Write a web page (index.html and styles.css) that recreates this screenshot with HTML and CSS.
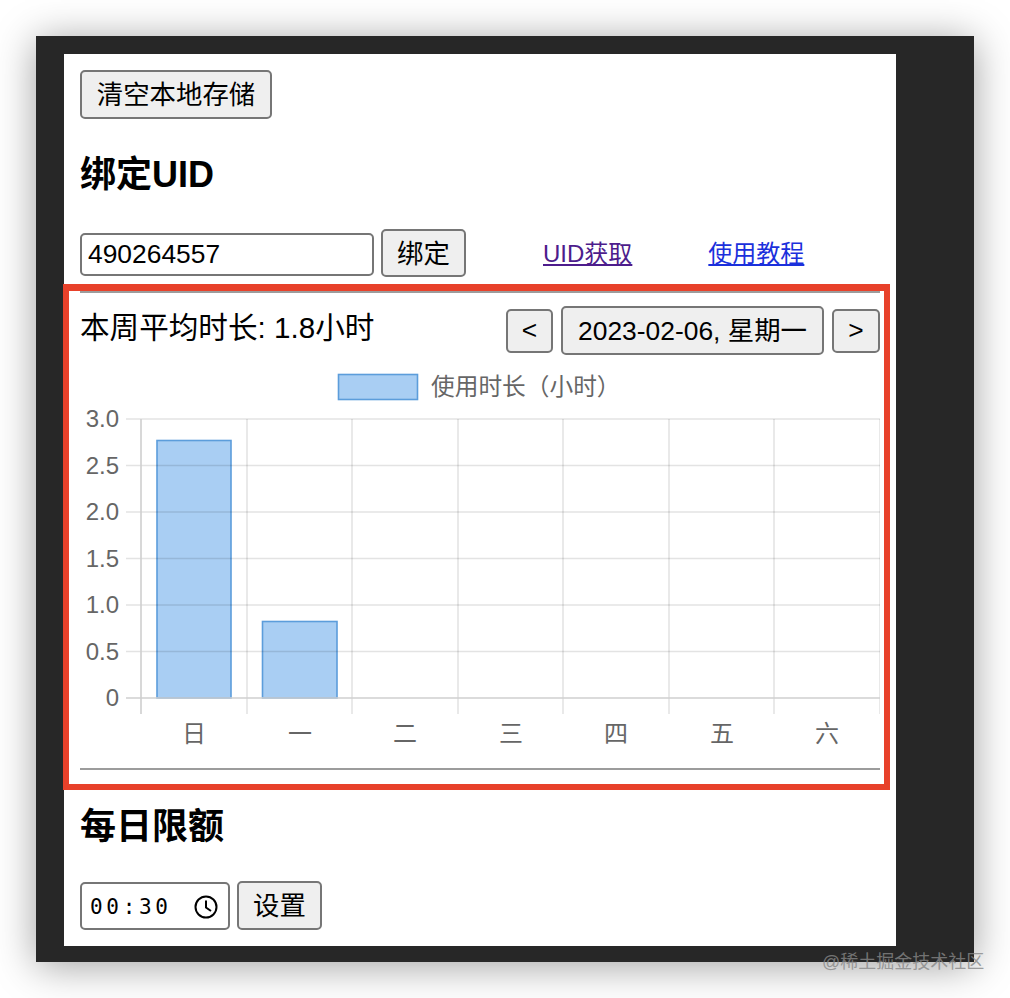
FILE: index.html
```html
<!DOCTYPE html>
<html lang="zh">
<head>
<meta charset="utf-8">
<title>每日限额</title>
<link rel="stylesheet" href="styles.css">
</head>
<body>
<div class="window">
  <main class="panel">
    <button class="btn btn-clear">清空本地存储</button>
    <h2 class="heading heading-uid">绑定UID</h2>
    <div class="uid-row">
      <input class="uid-input" type="text" value="490264557">
      <button class="btn btn-bind">绑定</button>
      <a class="link link-visited" href="#a">UID获取</a>
      <a class="link link-fresh" href="#b">使用教程</a>
    </div>
    <section class="stats">
      <hr class="rule">
      <div class="stats-head">
        <div class="stats-title">本周平均时长: 1.8小时</div>
        <button class="btn btn-nav btn-prev">&lt;</button>
        <button class="btn btn-date">2023-02-06, 星期一</button>
        <button class="btn btn-nav btn-next">&gt;</button>
      </div>
      <svg class="chart" viewBox="80 362 800 400" width="800" height="400">
        <rect class="bar" x="338.5" y="374.5" width="79" height="25"/>
        <text class="legend-label" x="431" y="395">使用时长（小时）</text>
        <rect class="bar" x="157" y="440.5" width="74" height="257.5"/>
        <rect class="bar" x="262.5" y="621.5" width="74.5" height="76.5"/>
        <g class="grid">
          <path d="M126 419H880M126 465.5H880M126 512H880M126 558.5H880M126 605H880M126 651.5H880"/>
          <path d="M247 419V714M352 419V714M458 419V714M563 419V714M669 419V714M774 419V714M880 419V714"/>
        </g>
        <path class="axis" d="M141 419V714M126 698H880"/>
        <g class="y-labels">
          <text x="119" y="427">3.0</text>
          <text x="119" y="473.5">2.5</text>
          <text x="119" y="520">2.0</text>
          <text x="119" y="566.5">1.5</text>
          <text x="119" y="613">1.0</text>
          <text x="119" y="659.5">0.5</text>
          <text x="119" y="706">0</text>
        </g>
        <g class="x-labels">
          <text x="194" y="742">日</text>
          <text x="300" y="742">一</text>
          <text x="405" y="742">二</text>
          <text x="511" y="742">三</text>
          <text x="616" y="742">四</text>
          <text x="722" y="742">五</text>
          <text x="827" y="742">六</text>
        </g>
      </svg>
      <hr class="rule rule-bottom">
    </section>
    <h2 class="heading heading-limit">每日限额</h2>
    <div class="limit-row">
      <div class="time-input">
        <span class="time-value">00:30</span>
        <svg class="clock" viewBox="0 0 24 24" width="24" height="24">
          <circle cx="12" cy="12" r="10.5"/>
          <path d="M12 5.5V12.5L17 16"/>
        </svg>
      </div>
      <button class="btn btn-set">设置</button>
    </div>
  </main>
</div>
<div class="watermark">@稀土掘金技术社区</div>
</body>
</html>
```

FILE: styles.css
```css
* {
  box-sizing: border-box;
}

html,
body {
  margin: 0;
  background: #fff;
}

body {
  position: relative;
  height: 998px;
  overflow: hidden;
  padding: 36px 36px 0;
  font-family: "Liberation Sans", "Noto Sans CJK SC", sans-serif;
  color: #000;
}

.window {
  width: 938px;
  height: 926px;
  padding: 18px 78px 16px 28px;
  background: #272727;
  box-shadow: 0 4px 38px rgba(0, 0, 0, 0.38);
}

.panel {
  width: 832px;
  height: 892px;
  padding: 16px;
  background: #fff;
}

.btn {
  display: block;
  height: 49px;
  margin: 0;
  padding: 0 0 4px;
  border: 2px solid #767676;
  border-radius: 5px;
  background: #efefef;
  color: #000;
  font: 26.4px "Liberation Sans", "Noto Sans CJK SC", sans-serif;
}

.btn-clear {
  width: 192px;
}

.heading {
  margin: 0;
  font-size: 36px;
  line-height: 42px;
  font-weight: 700;
}

.heading-uid {
  margin-top: 35px;
  margin-bottom: 33px;
}

.heading-limit {
  margin-top: 16px;
  margin-bottom: 33px;
}

.uid-row {
  display: flex;
  align-items: flex-end;
  height: 48px;
}

.uid-input {
  width: 294px;
  height: 43px;
  margin: 0 7px 1px 0;
  padding: 0 6px;
  border: 2px solid #767676;
  border-radius: 5px;
  background: #fff;
  color: #000;
  font: 26.4px "Liberation Sans", sans-serif;
}

.btn-bind {
  width: 85px;
  height: 48px;
}

.link {
  margin-bottom: 7px;
  font-size: 24px;
  line-height: 32px;
}

.link-visited {
  margin-left: 77px;
  color: #4d1c8c;
}

.link-fresh {
  margin-left: 76px;
  color: #1b30dc;
}

.stats {
  margin: 7px -10px 0 -17px;
  height: 506px;
  padding: 0 4px 0 11px;
  border: 6px solid #e8412a;
  border-top-width: 7px;
}

.rule {
  height: 2px;
  margin: 0;
  border: 0;
  background: #9c9c9c;
}

.rule-bottom {
  margin-top: 6px;
}

.stats-head {
  display: flex;
  align-items: center;
  gap: 8px;
  height: 48px;
  margin-top: 13px;
}

.stats-title {
  margin-right: auto;
  font-size: 29.6px;
  line-height: 44px;
  transform: translateY(-2px);
}

.btn-nav {
  height: 44px;
  margin-top: 2px;
  padding-bottom: 2px;
}

.btn-prev {
  width: 47px;
}

.btn-next {
  width: 48px;
}

.btn-date {
  width: 263px;
  height: 49px;
}

.chart {
  display: block;
  margin-top: 8px;
}

.grid path {
  fill: none;
  stroke: rgba(0, 0, 0, 0.11);
  stroke-width: 1.6;
}

.axis {
  fill: none;
  stroke: #cfcfcf;
  stroke-width: 1.6;
}

.bar {
  fill: rgba(98, 165, 234, 0.55);
  stroke: #5c9ddb;
  stroke-width: 1.6;
}

.legend-label {
  fill: #666;
  font-size: 23.7px;
}

.y-labels text {
  fill: #666;
  font-size: 24px;
  text-anchor: end;
}

.x-labels text {
  fill: #666;
  font-size: 24px;
  text-anchor: middle;
}

.limit-row {
  display: flex;
  align-items: center;
  gap: 7px;
}

.time-input {
  display: flex;
  align-items: center;
  justify-content: space-between;
  width: 150px;
  height: 48px;
  padding: 2px 10px 0 8px;
  border: 2px solid #767676;
  border-radius: 5px;
  background: #fff;
}

.time-value {
  font-family: "DejaVu Sans Mono", monospace;
  font-size: 21px;
  letter-spacing: 3.7px;
}

.clock {
  display: block;
  fill: none;
  stroke: #000;
  stroke-width: 2;
}

.btn-set {
  width: 85px;
}

.watermark {
  position: absolute;
  left: 822px;
  top: 949px;
  color: rgba(135, 135, 135, 0.8);
  font-size: 18px;
  line-height: 26px;
  white-space: nowrap;
}
```
